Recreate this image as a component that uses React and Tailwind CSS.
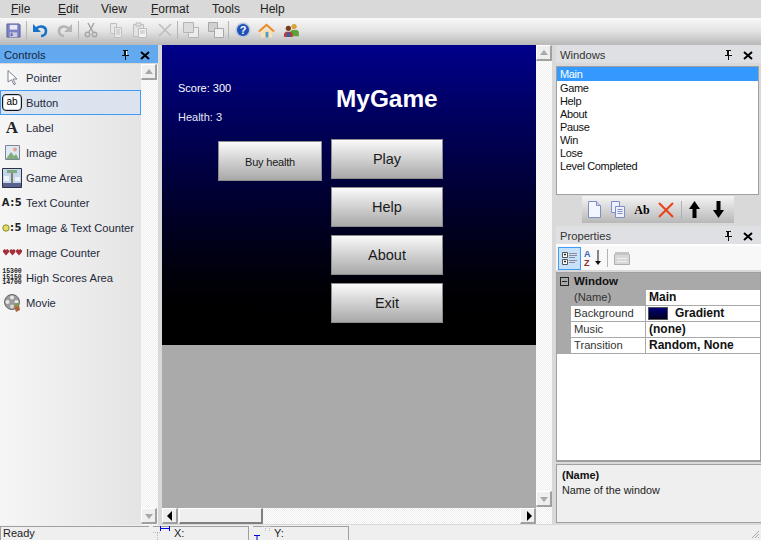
const Pin = () => (
  <svg width="9" height="10" viewBox="0 0 9 10" className="block"><path d="M2 0h5v1H6v4h2v1H5v4H4V6H1V5h2V1H2z" fill="#111" /><path d="M5 1h1v4H5z" fill="#fff" /></svg>
);
const Close = () => (
  <svg width="10" height="9" viewBox="0 0 10 9" className="block"><path d="M1 1l8 7M9 1L1 8" stroke="#000" strokeWidth="2" /></svg>
);
const PanelHeader = ({ title, blue }) => (
  <div className={`h-[18px] flex items-center pt-[2px] pl-[4px] pr-[8px] text-[11.2px] shrink-0 ${blue ? "bg-[#63a9ef] text-[#10253d]" : "bg-[#dfe0e3] text-[#333]"}`}>
    <span className="flex-1">{title}</span>
    <span className="mr-[10px]"><Pin /></span>
    <Close />
  </div>
);
const Btn = ({ dir, muted, className = "" }) => {
  const fill = muted ? "#a8a8a8" : "#000";
  const paths = { up: "M2 9l4-5 4 5z", down: "M2 5l4 5 4-5z", left: "M8 2L3 7l5 5z", right: "M5 2l5 5-5 5z" };
  return (
    <div className={`w-[16px] h-[16px] bg-[#efefef] border-t border-l border-t-[#fff] border-l-[#fff] border-r-2 border-b-2 border-r-[#a0a0a0] border-b-[#a0a0a0] flex items-center justify-center shrink-0 ${className}`}>
      <svg width="12" height="14" viewBox="0 0 12 14"><path d={paths[dir]} fill={fill} /></svg>
    </div>
  );
};

const IconSave = () => (<svg width="15" height="15" viewBox="0 0 16 16"><path d="M1 1h13l1 1v13H1z" fill="#7d82c4" stroke="#5c5f9e" /><path d="M4 2h8v5H4z" fill="#e8e9f4" /><path d="M4 10h8v5H4z" fill="#c9cbe0" /><path d="M5 11h2v3H5z" fill="#5c5f9e" /></svg>);
const IconUndo = ({ c = "#1673c9" }) => (<svg width="16" height="16" viewBox="0 0 16 16"><path d="M4 7c3-4 10-3 10 2 0 3-2 5-5 5" fill="none" stroke={c} strokeWidth="2.6" /><path d="M1 2v8h8z" fill={c} /></svg>);
const IconRedo = () => (<svg width="16" height="16" viewBox="0 0 16 16"><path d="M12 7C9 3 2 4 2 9c0 3 2 5 5 5" fill="none" stroke="#b5b5b5" strokeWidth="2.6" /><path d="M15 2v8H7z" fill="#b5b5b5" /></svg>);
const IconCut = () => (<svg width="16" height="16" viewBox="0 0 16 16" fill="none" stroke="#a6a6a6"><path d="M5 1l5 9M11 1L6 10" strokeWidth="1.5" /><circle cx="4.5" cy="12.5" r="2.2" strokeWidth="1.5" /><circle cx="11.5" cy="12.5" r="2.2" strokeWidth="1.5" /></svg>);
const IconCopy = () => (<svg width="16" height="16" viewBox="0 0 16 16" fill="#e8e8e8" stroke="#c0c0c0"><path d="M2.500 1.500h6v10h-6z" /><path d="M6.500 5.500h7v10h-7z" /><path d="M8 8h4M8 10h4M8 12h4" /></svg>);
const IconPaste = () => (<svg width="16" height="16" viewBox="0 0 16 16" fill="#e3e3e3" stroke="#bdbdbd"><path d="M1.500 2.500h10v12h-10z" /><path d="M4 1h5v3H4z" /><path d="M6.500 6.500h8v9h-8z" fill="#f2f2f2" /><path d="M8 9h5M8 11h5" /></svg>);
const IconX = () => (<svg width="16" height="16" viewBox="0 0 16 16"><path d="M2 2l12 12M14 2L2 14" stroke="#bdbdbd" strokeWidth="1.600" /></svg>);
const IconFront = () => (<svg width="16" height="16" viewBox="0 0 16 16" stroke="#b4b4b4"><path d="M5.500 5.500h10v10h-10z" fill="#ececec" /><path d="M.500.500h10v10H.500z" fill="#dcdcdc" /></svg>);
const IconBack = () => (<svg width="16" height="16" viewBox="0 0 16 16" stroke="#a8a8a8"><path d="M.500.500h9v9h-9z" fill="#d0d0d0" /><path d="M6.500 6.500h9v9h-9z" fill="#f0f0f0" /></svg>);
const IconHelp = () => (<svg width="16" height="16" viewBox="0 0 16 16"><circle cx="8" cy="8" r="7.500" fill="#b8c4dc" /><circle cx="8" cy="8" r="6" fill="#1e50b8" /><text x="8" y="12" textAnchor="middle" fontSize="11" fontWeight="700" fontFamily="Liberation Sans" fill="#fff">?</text></svg>);
const IconHome = () => (<svg width="17" height="16" viewBox="0 0 18 16"><path d="M3 8h12v8H3z" fill="#f7e2b5" /><path d="M8 10h3v6H8z" fill="#4a9bd8" /><path d="M0 9l9-8 9 8-2 1-7-6-7 6z" fill="#ef8a24" /></svg>);
const IconUsers = () => (<svg width="16" height="14" viewBox="0 0 18 16"><circle cx="12.500" cy="4" r="3" fill="#d8a33a" /><path d="M8 15v-5l2-2h6l2 2v5z" fill="#5da23d" /><circle cx="6" cy="6" r="3" fill="#7a3a1c" /><path d="M1 16v-4l2-2h6l2 2v4z" fill="#c03a30" /><path d="M4 11h4v5H4z" fill="#2f5fb0" /></svg>);

const Tool = ({ children, w = "w-[24px]" }) => <div className={`${w} flex items-center justify-center shrink-0`}>{children}</div>;
const Sep = () => <div className="w-px h-[18px] bg-[#b4b4b4] shrink-0" />;

const IconPointer = () => (<svg width="11" height="15" viewBox="0 0 11 15"><path d="M1 .5l9 8.500H6l2.500 5-1.500.700-2.500-5L1 12z" fill="#fff" stroke="#7b818c" /></svg>);
const IconAb = () => (<div className="w-[20px] h-[17px] border border-[#111] rounded-[4px] bg-white text-[10px] leading-[14px] text-center text-black shadow-[inset_0_0_0_1px_#c9d4e4]">ab</div>);
const IconA = () => <span className="text-[17px] leading-[17px] font-bold text-[#222] [font-family:'Liberation_Serif',serif]">A</span>;
const IconImage = () => (<svg width="15" height="15" viewBox="0 0 15 15"><path d="M.5.500h14v14H.500z" fill="#dfe8f3" stroke="#7b8796" /><path d="M1 14l5-7 3 4 2-2 3 5z" fill="#7fae7a" /><circle cx="10" cy="4.500" r="2" fill="#e4a38f" /></svg>);
const IconGame = () => (<svg width="20" height="20" viewBox="0 0 20 20"><path d="M.5.500h19v19H.500z" fill="#c5d7ee" stroke="#2c3244" /><path d="M1 15h18v4H1z" fill="#59618e" /><path d="M9 5h2v10H9z" fill="#86806a" /><path d="M5 2h10v3H5z" fill="#7fa97f" /><path d="M2 8h5v5H2zM13 9h5v4h-5z" fill="#eef3fa" /></svg>);
const CounterLabel = ({ t }) => <span className="text-[10px] font-bold tracking-[0.5px] text-[#222] [font-family:'DejaVu_Sans',sans-serif]">{t}</span>;
const IconAF = () => <CounterLabel t="A:5" />;
const IconCoin = () => (<span className="flex items-center"><svg width="8" height="8" viewBox="0 0 8 8"><circle cx="4" cy="4" r="3.200" fill="#e4dc6a" stroke="#8a8a30" /></svg><CounterLabel t=":5" /></span>);
const IconHearts = () => (<svg width="19" height="7" viewBox="0 0 19 7">{[0, 6.500, 13].map((x) => (<path key={x} d="M0 1.500L1.500 0 3 1l1.500-1L6 1.500V3L3 6.500 0 3z" transform={`translate(${x} 0)`} fill="#a62f3a" />))}</svg>);
const IconScores = () => (<div className="text-[6.5px] leading-[5.5px] font-bold text-[#222] [font-family:'Liberation_Mono',monospace]"><div>15300</div><div>15150</div><div>14700</div></div>);
const IconMovie = () => (<svg width="17" height="18" viewBox="0 0 17 18"><circle cx="8" cy="8" r="7.500" fill="#9c9c9c" stroke="#666" /><circle cx="8" cy="3.500" r="2" fill="#e8e8e8" /><circle cx="3.500" cy="8" r="2" fill="#e8e8e8" /><circle cx="8" cy="12.500" r="2" fill="#d8d8d8" /><circle cx="12.500" cy="8" r="2" fill="#e8e8e8" /><path d="M10 12l5-1 1 5-4 2z" fill="#b0603a" /><path d="M11 9h3v4h-3z" fill="#7a9a50" /></svg>);

const controls = [
  ["Pointer", IconPointer], ["Button", IconAb], ["Label", IconA], ["Image", IconImage], ["Game Area", IconGame],
  ["Text Counter", IconAF], ["Image & Text Counter", IconCoin], ["Image Counter", IconHearts], ["High Scores Area", IconScores], ["Movie", IconMovie],
];

const GameButton = ({ label, className }) => (
  <div className={`absolute flex items-center justify-center pt-[2px] border border-[#8c8c8c] bg-gradient-to-b from-[#fafafa] to-[#a9a9a9] text-[#1a1a1a] ${className}`}>{label}</div>
);

const windowsList = ["Game", "Help", "About", "Pause", "Win", "Lose", "Level Completed"];

const IconNew = () => (<svg width="15" height="17" viewBox="0 0 15 17"><path d="M1.500.500h8l4 4v12h-12z" fill="#f4f6ff" stroke="#7f8fc4" /><path d="M9.500.500v4h4" fill="#cdd6f0" stroke="#7f8fc4" /></svg>);
const IconDup = () => (<svg width="16" height="17" viewBox="0 0 16 17" fill="#eef1fb" stroke="#7f8fc4"><path d="M1.500.500h8v11h-8z" /><path d="M5.500 5.500h9v11h-9z" /><path d="M7.500 8.500h5M7.500 10.500h5M7.500 12.500h5" /></svg>);
const IconRename = () => (<span className="text-[12px] font-bold text-black leading-none [font-family:'Liberation_Serif',serif]">Ab</span>);
const IconRed = () => (<svg width="16" height="16" viewBox="0 0 16 16"><path d="M1 1l14 14M15 1L1 15" stroke="#e8421c" strokeWidth="2" /></svg>);
const IconUp = () => (<svg width="11" height="17" viewBox="0 0 11 17"><path d="M5.500 0L11 8H7.500v9h-4V8H0z" fill="#000" /></svg>);
const IconDown = () => (<svg width="11" height="17" viewBox="0 0 11 17"><path d="M5.500 17L11 9H7.500V0h-4v9H0z" fill="#000" /></svg>);
const IconCat = () => (<div className="w-[23px] h-[23px] bg-[#c8e1fb] border border-[#3f9bf6] flex items-center justify-center shrink-0"><svg width="16" height="15" viewBox="0 0 16 15" fill="none" stroke="#555"><path d="M.5 1.500h5v5h-5zM.5 8.500h5v5h-5z" fill="#fff" /><path d="M2 3.500h2M3 2.500v2M2 10.500h2M3 9.500v2" stroke="#222" /><path d="M7 2.500h8M7 4.500h8M7 6.500h6M7 9.500h8M7 11.500h6" stroke="#8a8a9a" /></svg></div>);
const IconAZ = () => (<svg width="20" height="18" viewBox="0 0 20 18"><text x="0" y="8" fontSize="9" fontWeight="700" fontFamily="Liberation Sans" fill="#3a62b0">A</text><text x="0" y="17" fontSize="9" fontWeight="700" fontFamily="Liberation Sans" fill="#8a3030">Z</text><path d="M14 1v13" stroke="#111" /><path d="M11 12l3 4 3-4z" fill="#111" /></svg>);
const IconPages = () => (<svg width="16" height="14" viewBox="0 0 16 14"><path d="M.5 3.500h15v10H.500z" fill="#d8d8d8" stroke="#b0b0b0" /><path d="M1 1h14v3H1z" fill="#c4c4c4" /><path d="M3 7h10v1H3zM3 10h10v1H3z" fill="#f0f0f0" /></svg>);

const PropRow = ({ name, value, selected, swatch }) => (
  <div className="h-[16px] flex border-b border-[#a9a9a9]">
    <div className={`w-[75px] ml-[14px] pl-[3px] leading-[15px] text-[11.2px] text-[#333] border-r border-[#a9a9a9] ${selected ? "bg-[#a9a9a9]" : "bg-white"}`}>{name}</div>
    <div className="flex-1 bg-white pl-[3px] leading-[15px] font-bold text-[#111] flex items-center">
      {swatch && <span className="w-[20px] h-[13px] ml-[-1px] mr-[7px] bg-gradient-to-b from-[#00007a] to-[#000020] border border-[#555]" />}
      {value}
    </div>
  </div>
);

const dither = "bg-[repeating-conic-gradient(#ffffff_0_25%,#eeeeee_0_50%)] bg-[length:2px_2px]";

export default function App() {
  return (
    <div className="w-[761px] h-[540px] overflow-hidden flex flex-col bg-[#efefef] text-[12px] text-[#222] [font-family:'Liberation_Sans',Arial,sans-serif]">
      <div className="h-[18px] bg-[#d9d9d9] flex items-center pl-[11px] shrink-0 text-[#222]">
        <span className="w-[47px]"><u>F</u>ile</span>
        <span className="w-[43px]"><u>E</u>dit</span>
        <span className="w-[50px]">View</span>
        <span className="w-[61px]"><u>F</u>ormat</span>
        <span className="w-[48px]">Tools</span>
        <span>Help</span>
      </div>
      <div className="h-[27px] shrink-0 bg-gradient-to-b from-[#f8f8f8] via-[#e2e2e2] to-[#b8b8b8] flex items-center pb-[3px]">
        <Tool w="w-[26px]"><IconSave /></Tool>
        <Sep />
        <Tool w="w-[25px]"><IconUndo /></Tool>
        <Tool w="w-[26px]"><IconRedo /></Tool>
        <Sep />
        <Tool w="w-[24px]"><IconCut /></Tool>
        <Tool w="w-[25px]"><IconCopy /></Tool>
        <Tool w="w-[24px]"><IconPaste /></Tool>
        <Tool w="w-[25px]"><IconX /></Tool>
        <Sep />
        <Tool w="w-[25px]"><IconFront /></Tool>
        <Tool w="w-[25px]"><IconBack /></Tool>
        <Sep />
        <Tool w="w-[27px]"><IconHelp /></Tool>
        <Tool w="w-[21px]"><IconHome /></Tool>
        <Tool w="w-[27px]"><IconUsers /></Tool>
      </div>

      <div className="flex h-[480px] shrink-0 bg-[#d9d9d9]">
        {/* Controls */}
        <div className="w-[158px] flex flex-col shrink-0">
          <PanelHeader title="Controls" blue />
          <div className="flex flex-1 h-0 mt-[1px]">
            <div className="w-[141px] bg-gradient-to-r from-[#f6f6f6] to-[#e4e4e4] pt-[1px] flex flex-col">
              {controls.map(([label, Ic]) => {
                const sel = label === "Button";
                return (
                  <div key={label} className={`h-[25px] shrink-0 flex items-center ${sel ? "bg-[#dbe3ef] border border-[#3f9bf6]" : "border border-transparent"}`}>
                    <span className="w-[20px] ml-[1px] mr-[4px] flex justify-center items-center shrink-0"><Ic /></span>
                    <span className="text-[#1e2a3c] text-[11.2px] whitespace-nowrap pt-[2px]">{label}</span>
                  </div>
                );
              })}
            </div>
            <div className={`w-[17px] ${dither} flex flex-col justify-between pb-[1px]`}>
              <Btn dir="up" muted />
              <Btn dir="down" muted />
            </div>
          </div>
        </div>

        {/* Design area */}
        <div className="w-[374px] ml-[4px] flex flex-col shrink-0">
          <div className="h-[463px] bg-[#aaaaaa] relative shrink-0">
            <div className="h-[300px] bg-gradient-to-b from-[#00008b] to-black" />
            <span className="absolute left-[16px] top-[35px] text-white text-[11px]">Score: 300</span>
            <span className="absolute left-[16px] top-[64px] text-[#e8e8f4] text-[11px]">Health: 3</span>
            <span className="absolute left-[174px] top-[40px] text-white text-[24.400px] leading-[28px] font-bold">MyGame</span>
            <GameButton label="Buy health" className="left-[56px] top-[96px] w-[104px] h-[40px] text-[11px] tracking-[-0.2px]" />
            <GameButton label="Play" className="left-[169px] top-[94px] w-[112px] h-[40px] text-[14.500px]" />
            <GameButton label="Help" className="left-[169px] top-[142px] w-[112px] h-[40px] text-[14.500px]" />
            <GameButton label="About" className="left-[169px] top-[190px] w-[112px] h-[40px] text-[14.500px]" />
            <GameButton label="Exit" className="left-[169px] top-[238px] w-[112px] h-[40px] text-[14.500px]" />
          </div>
          <div className={`h-[16px] flex ${dither} shrink-0`}>
            <Btn dir="left" />
            <div className="w-[84px] ml-[1px] bg-[#efefef] border-t border-l border-white border-r-2 border-b-2 border-r-[#808080] border-b-[#808080]" />
            <div className="flex-1" />
            <Btn dir="right" />
          </div>
        </div>
        <div className={`w-[16px] flex flex-col shrink-0 ${dither} h-[479px]`}>
          <Btn dir="up" muted />
          <div className="h-[430px]" />
          <Btn dir="down" muted />
        </div>

        {/* Right */}
        <div className="w-[205px] ml-[4px] flex flex-col shrink-0">
          <PanelHeader title="Windows" />
          <div className="h-[129px] mt-[3px] mr-[2px] border border-[#a0a0a0] bg-white shrink-0 leading-[15px] text-[11px] tracking-[-0.35px] text-[#111]">
            <div className="h-[14px] bg-[#3399ff] text-white pl-[3px]">Main</div>
            {windowsList.map((w) => (<div key={w} className="h-[13px] pl-[3px]">{w}</div>))}
          </div>
          <div className="h-[27px] w-[152px] ml-[26px] mt-[1px] bg-gradient-to-b from-[#f4f4f4] to-[#b8b8b8] flex items-center shrink-0">
            <Tool><IconNew /></Tool>
            <Tool><IconDup /></Tool>
            <Tool><IconRename /></Tool>
            <Tool><IconRed /></Tool>
            <div className="w-px h-[18px] bg-[#b0b0b0] ml-[3px]" />
            <Tool><IconUp /></Tool>
            <Tool><IconDown /></Tool>
          </div>
          <div className="h-[3px] shrink-0" />
          <PanelHeader title="Properties" />
          <div className="h-[26px] bg-[#f8f8f8] flex items-center pl-[2px] shrink-0 border-t-2 border-white">
            <IconCat />
            <span className="w-[26px] flex justify-center"><IconAZ /></span>
            <Sep />
            <span className="ml-[6px]"><IconPages /></span>
          </div>
          <div className="h-[190px] mt-[2px] border border-[#a0a0a0] border-b-2 bg-white flex flex-col shrink-0">
            <div className="bg-[#a9a9a9]">
              <div className="h-[17px] flex items-center pl-[3px] font-bold text-[11.500px] text-[#111]">
                <span className="w-[9px] h-[9px] border border-[#222] mr-[5px] flex items-center justify-center"><span className="w-[5px] h-px bg-[#222]" /></span>
                Window
              </div>
              <PropRow name="(Name)" value="Main" selected />
              <PropRow name="Background" value="Gradient" swatch />
              <PropRow name="Music" value="(none)" />
              <PropRow name="Transition" value="Random, None" />
            </div>
          </div>
          <div className="h-[59px] mt-[2px] border-t border-l border-b border-[#a0a0a0] bg-[#efefef] pl-[5px] pt-[3px] shrink-0 leading-[15px]">
            <div className="font-bold text-[11px] text-[#111]">(Name)</div>
            <div className="text-[#222] text-[10.800px]">Name of the window</div>
          </div>
        </div>
      </div>

      {/* Status */}
      <div className="h-[15px] shrink-0 flex items-end bg-[#efefef] text-[#222] relative">
        <div className="w-[149px] h-[14px] border-t border-l border-[#a0a0a0] pl-[2px] leading-[13px] text-[11px]">Ready</div>
        <div className="w-[96px] h-[14px] ml-[4px] border-t border-r border-[#a0a0a0] flex items-center text-[11px]">
          <svg width="17" height="16" viewBox="0 0 17 16" className="shrink-0 -mt-[2px] overflow-visible"><path d="M7.500 1v5M16.500 1v5M8 3.500h8" stroke="#0000e0" /><path d="M4.500 8v7M0 7.500h7" stroke="#b8b8b8" strokeDasharray="1 1" /></svg>
          <span className="ml-[4px]">X:</span>
        </div>
        <div className="w-[96px] h-[14px] ml-[4px] border-t border-r border-[#a0a0a0] flex items-center text-[11px]">
          <svg width="17" height="16" viewBox="0 0 17 16" className="shrink-0 -mt-[2px] overflow-visible"><path d="M1 10.500h6M1 15.500h6M4 11v4" stroke="#0000e0" /><path d="M9 1.500h7M12.500 1v6M16.500 1v6" stroke="#b8b8b8" strokeDasharray="1 1" /></svg>
          <span className="ml-[4px]">Y:</span>
        </div>
        <svg width="9" height="9" viewBox="0 0 9 9" className="absolute right-[1px] bottom-[1px]"><path d="M1 8l7-7M4 8l4-4M7 8l1-1" stroke="#a8a8a8" /></svg>
      </div>
    </div>
  );
}
